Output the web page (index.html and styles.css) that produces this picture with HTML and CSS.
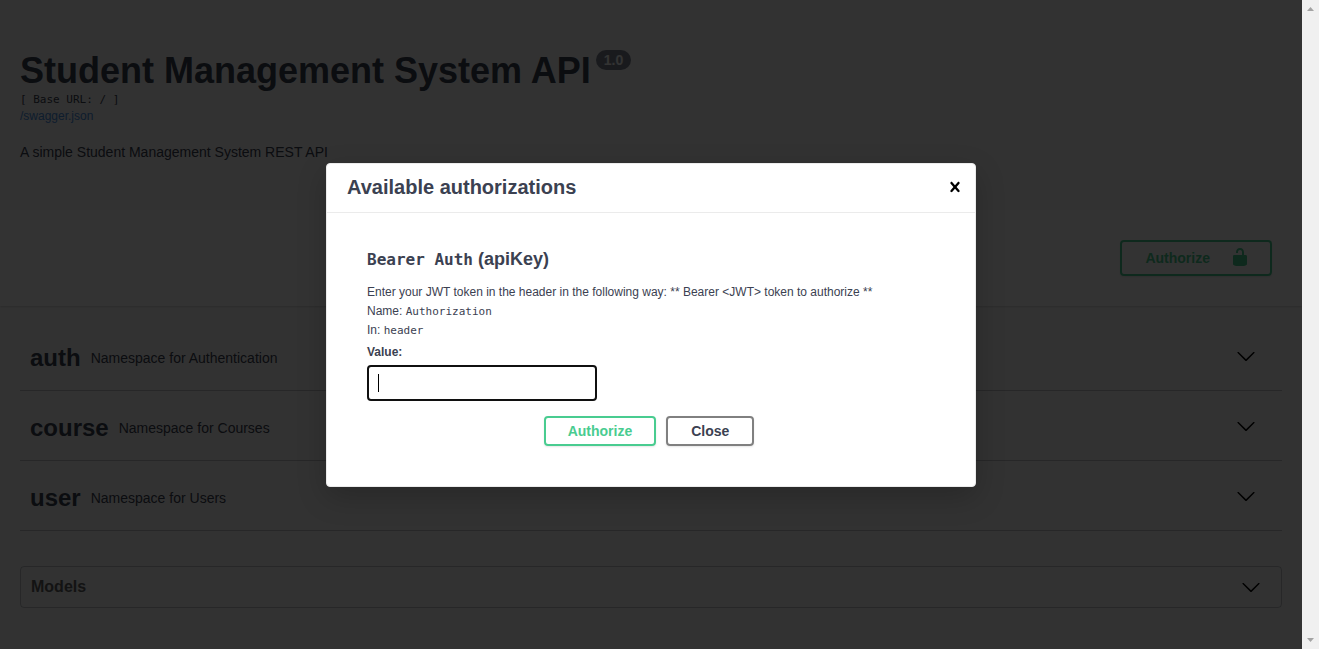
FILE: index.html
```html
<!DOCTYPE html>
<html lang="en">
<head>
<meta charset="utf-8">
<title>Student Management System API</title>
<link rel="stylesheet" href="styles.css">
</head>
<body>
<svg width="0" height="0" class="sprite" aria-hidden="true">
  <symbol id="arrow" viewBox="0 0 20 20"><path d="M17.418 6.109c.272-.268.709-.268.979 0s.271.701 0 .969l-7.908 7.83c-.27.268-.707.268-.979 0l-7.908-7.83c-.27-.268-.27-.701 0-.969.271-.268.709-.268.979 0L10 13.25l7.418-7.141z"/></symbol>
  <symbol id="unlocked" viewBox="0 0 20 20"><path d="M15.8 8H14V5.6C14 2.703 12.665 1 10 1 7.334 1 6 2.703 6 5.6V6h2v-.801C8 3.754 8.797 3 10 3c1.203 0 2 .754 2 2.199V8H4c-.553 0-1 .646-1 1.199V17c0 .549.428 1.139.951 1.307l1.197.387C5.672 18.861 6.55 19 7.1 19h5.8c.549 0 1.428-.139 1.951-.307l1.196-.387c.524-.167.953-.757.953-1.306V9.199C17 8.646 16.352 8 15.8 8z"/></symbol>
  <symbol id="close" viewBox="0 0 20 20"><path d="M14.348 14.849c-.469.469-1.229.469-1.697 0L10 11.819l-2.651 3.029c-.469.469-1.229.469-1.697 0-.469-.469-.469-1.229 0-1.697l2.758-3.15-2.759-3.152c-.469-.469-.469-1.228 0-1.697.469-.469 1.228-.469 1.697 0L10 8.183l2.651-3.031c.469-.469 1.228-.469 1.697 0 .469.469.469 1.229 0 1.697l-2.758 3.152 2.758 3.15c.469.469.469 1.229 0 1.698z"/></symbol>
</svg>
<div class="app">
  <main class="page">
    <header class="info">
      <div class="title-row">
        <h1 class="title">Student Management System API</h1>
        <span class="version">1.0</span>
      </div>
      <pre class="base-url">[ Base URL: / ]</pre>
      <a class="spec-link" href="/swagger.json">/swagger.json</a>
      <p class="description">A simple Student Management System REST API</p>
    </header>
    <section class="schemes">
      <button class="btn authorize btn-unlock" type="button">Authorize
        <svg class="icon"><use href="#unlocked"/></svg>
      </button>
    </section>
    <section class="tags">
      <div class="tag">
        <h3 class="tag-name">auth</h3>
        <p class="tag-text">Namespace for Authentication</p>
        <button class="toggle" type="button" aria-label="Expand auth"><svg class="icon"><use href="#arrow"/></svg></button>
      </div>
      <div class="tag">
        <h3 class="tag-name">course</h3>
        <p class="tag-text">Namespace for Courses</p>
        <button class="toggle" type="button" aria-label="Expand course"><svg class="icon"><use href="#arrow"/></svg></button>
      </div>
      <div class="tag">
        <h3 class="tag-name">user</h3>
        <p class="tag-text">Namespace for Users</p>
        <button class="toggle" type="button" aria-label="Expand user"><svg class="icon"><use href="#arrow"/></svg></button>
      </div>
    </section>
    <section class="models">
      <h4 class="models-title">Models</h4>
      <button class="toggle" type="button" aria-label="Expand models"><svg class="icon"><use href="#arrow"/></svg></button>
    </section>
    <div class="backdrop">
      <div class="modal" role="dialog" aria-modal="true" aria-labelledby="modal-title">
        <div class="modal-header">
          <h3 class="modal-title" id="modal-title">Available authorizations</h3>
          <button class="toggle" type="button" aria-label="Close dialog"><svg class="icon"><use href="#close"/></svg></button>
        </div>
        <form class="modal-body">
          <h4 class="scheme-name"><code class="scheme-code">Bearer Auth</code> (apiKey)</h4>
          <p class="line">Enter your JWT token in the header in the following way: ** Bearer &lt;JWT&gt; token to authorize **</p>
          <p class="line">Name: <code class="code">Authorization</code></p>
          <p class="line">In: <code class="code">header</code></p>
          <label class="label" for="api-value">Value:</label>
          <input class="field" id="api-value" type="text" autofocus>
          <div class="actions">
            <button class="btn authorize" type="button">Authorize</button>
            <button class="btn" type="button">Close</button>
          </div>
        </form>
      </div>
    </div>
  </main>
  <div class="scrollbar" aria-hidden="true">
    <svg width="17" height="17" viewBox="0 0 17 17"><path d="M5 11h7L8.500 7z"/></svg>
    <svg width="17" height="17" viewBox="0 0 17 17"><path d="M5 6h7L8.500 10z"/></svg>
  </div>
</div>
</body>
</html>
```
FILE: styles.css
```css
* {
  box-sizing: border-box;
}

body {
  margin: 0;
  color: #3b4151;
  font-family: "Liberation Sans", Arial, sans-serif;
  font-size: 14px;
  line-height: 16px;
}

h1, h3, h4, p, pre {
  margin: 0;
}

.sprite {
  position: absolute;
}

.app {
  display: grid;
  grid-template-columns: 1fr 17px;
  min-height: 100vh;
}

.page {
  position: relative;
  overflow: hidden;
  background: #fafafa;
}

.info {
  padding: 50px 20px;
}

.title-row {
  display: flex;
  align-items: flex-start;
  gap: 5px;
}

.title {
  font-size: 36px;
  line-height: 41px;
}

.version {
  padding: 2px 8px;
  border-radius: 10px;
  background: #7d8492;
  color: #fff;
  font-weight: 700;
}

.base-url,
.code {
  font-family: "DejaVu Sans Mono", monospace;
  font-size: 11px;
}

.base-url {
  margin-top: 1px;
}

.spec-link {
  display: block;
  color: #4990e2;
  font-size: 12px;
  text-decoration: none;
}

.description {
  margin-top: 20px;
}

.schemes {
  display: flex;
  justify-content: flex-end;
  padding: 30px;
  background: #fff;
  box-shadow: 0 1px 2px rgba(0, 0, 0, .15);
}

.btn {
  height: 30px;
  padding: 0 23px;
  border: 2px solid #808080;
  border-radius: 4px;
  background: transparent;
  box-shadow: 0 1px 2px rgba(0, 0, 0, .1);
  color: #3b4151;
  font: 700 14px "Liberation Sans", Arial, sans-serif;
}

.authorize {
  border-color: #49cc90;
  color: #49cc90;
}

.btn-unlock {
  display: flex;
  align-items: center;
  gap: 20px;
  height: 36px;
  padding-right: 20px;
}

.icon {
  display: block;
  width: 20px;
  height: 20px;
  fill: currentColor;
}

.btn-unlock .icon {
  margin-bottom: 2px;
}

.toggle {
  margin-left: auto;
  padding: 0;
  border: 0;
  background: none;
  color: #000;
}

.tags {
  padding: 15px 20px 35px;
}

.tag {
  display: flex;
  align-items: center;
  gap: 10px;
  height: 70px;
  padding: 4px 26px 0 10px;
  border-bottom: 1px solid rgba(59, 65, 81, .3);
}

.tag .toggle {
  margin-bottom: 4px;
}

.tag-name {
  font-size: 24px;
  line-height: 28px;
}

.tag-text {
  color: #3b4151;
}

.models {
  display: flex;
  align-items: center;
  height: 42px;
  margin: 0 20px;
  padding: 0 20px 0 10px;
  border: 1px solid rgba(59, 65, 81, .3);
  border-radius: 4px;
}

.models-title {
  color: #606060;
  font-size: 16px;
}

.backdrop {
  position: absolute;
  inset: 0;
  display: grid;
  place-items: center;
  background: rgba(0, 0, 0, .8);
}

.modal {
  width: 100%;
  max-width: 650px;
  border: 1px solid #ebebeb;
  border-radius: 4px;
  background: #fff;
  box-shadow: 0 10px 30px rgba(0, 0, 0, .2);
}

.modal-header {
  display: flex;
  align-items: center;
  height: 49px;
  padding: 0 10px 2px 20px;
  border-bottom: 1px solid #ebebeb;
}

.modal-title {
  font-size: 20px;
  line-height: 24px;
}

.modal-body {
  padding: 34px 40px 40px;
}

.scheme-name {
  margin-bottom: 11px;
  font-size: 18px;
  line-height: 24px;
}

.scheme-code {
  font-family: "DejaVu Sans Mono", monospace;
  font-size: 16px;
}

.line,
.label {
  display: block;
  font-size: 12px;
  line-height: 19px;
}

.label {
  margin-top: 3px;
  font-weight: 700;
}

.field {
  display: block;
  width: 230px;
  height: 36px;
  margin: 3px 0 15px;
  padding: 8px 9px;
  border: 2px solid #101010;
  border-radius: 4px;
  outline: 0;
  background: linear-gradient(#000, #000) 9px 7px / 1px 18px no-repeat #fff;
  caret-color: transparent;
}

.actions {
  display: flex;
  justify-content: center;
  gap: 10px;
  padding-right: 4px;
}

.actions .authorize {
  padding: 0 22px;
}

.scrollbar {
  display: flex;
  flex-direction: column;
  justify-content: space-between;
  background: #f0f0f0;
  fill: #a3a3a3;
}
```
